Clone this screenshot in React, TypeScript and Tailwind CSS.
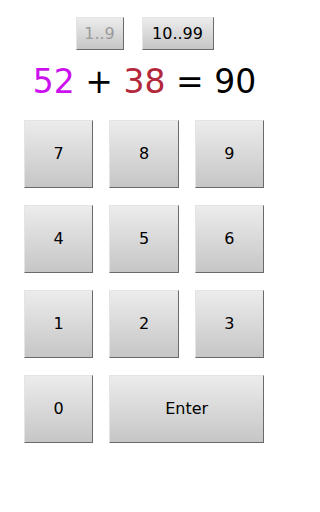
const btn =
  "flex items-center justify-center border border-t-[#e4e4e4] border-l-[#e4e4e4] border-r-[#6a6a6a] border-b-[#6a6a6a] bg-gradient-to-b from-[#ececec] to-[#c6c6c6] text-black";

export default function App() {
  const keys = ["7", "8", "9", "4", "5", "6", "1", "2", "3"];
  return (
    <div className="w-[288px] h-[512px] bg-white font-['DejaVu_Sans',sans-serif]">
      <div className="flex justify-center gap-[18px] pt-[17px] pl-[1px]">
        <button className={`${btn} w-[48px] h-[33px] text-[16px] !text-[#9a9a9a]`}>1..9</button>
        <button className={`${btn} w-[72px] h-[33px] text-[16px]`}>10..99</button>
      </div>
      <div className="flex justify-center mt-[10px] pl-[1px] text-[33px] leading-[44px] whitespace-pre">
        <span className="text-[#cc11ee]">52</span>
        <span> + </span>
        <span className="text-[#b3283a]">38</span>
        <span> = 90</span>
      </div>
      <div className="grid grid-cols-3 gap-x-[16px] gap-y-[17px] w-[240px] ml-[24px] mt-[16px]">
        {keys.map((k) => (
          <button key={k} className={`${btn} h-[68px] text-[16px]`}>
            {k}
          </button>
        ))}
        <button className={`${btn} h-[68px] text-[16px]`}>0</button>
        <button className={`${btn} col-span-2 h-[68px] text-[16px]`}>Enter</button>
      </div>
    </div>
  );
}
